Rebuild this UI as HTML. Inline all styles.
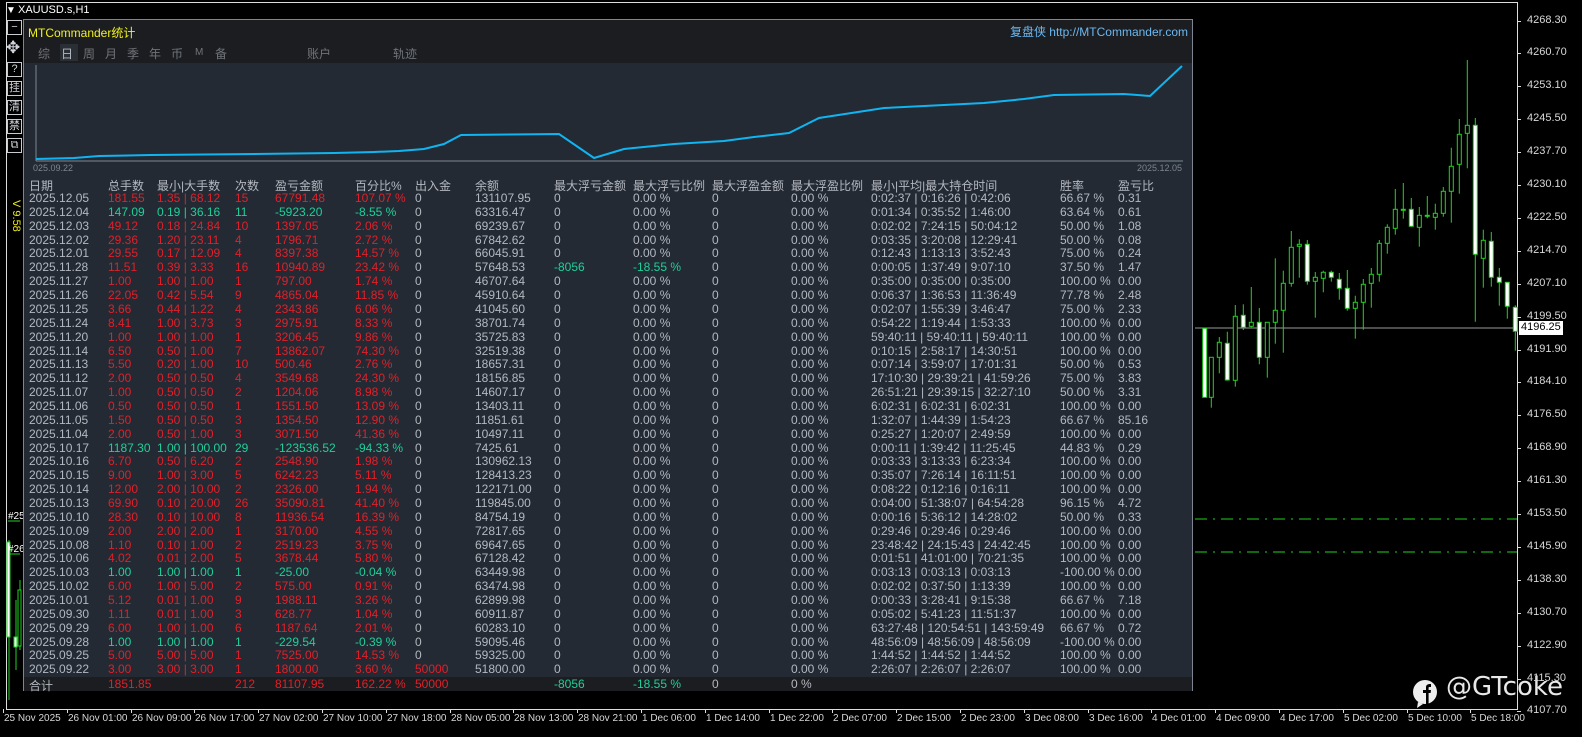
<!DOCTYPE html>
<html><head><meta charset="utf-8"><style>
*{margin:0;padding:0;box-sizing:border-box}
body{width:1582px;height:737px;background:#000;position:relative;overflow:hidden;font-family:"Liberation Sans","Noto Sans CJK SC",sans-serif;font-size:12px;color:#b4b8c0}
.a{position:absolute;white-space:nowrap}
#panel{position:absolute;left:23px;top:19px;width:1170px;height:672px;background:#232a33;border:1px solid #7d8590}
#hdr{position:absolute;left:0;top:0;width:100%;height:43px;background:#1b1d20}
.r{color:#e0202a}.g{color:#1fcf9a}.w{color:#b4b8c0}
.row{position:absolute;left:0;height:14px;width:100%}
.row span{position:absolute;top:0}
.tb{position:absolute;left:7px;width:15px;height:15px;border:1px solid #c8ccd2;color:#d0d4da;font-size:11px;text-align:center;line-height:13px}
.px{position:absolute;left:1527px;color:#d8d8d8;font-size:11px}
.tx{position:absolute;top:713px;color:#d8d8d8;font-size:10px}
</style></head><body>
<div class="a" style="left:6px;top:2px;width:1512px;height:1px;background:#ddd"></div>
<div class="a" style="left:6px;top:2px;width:1px;height:708px;background:#ddd"></div>
<div class="a" style="left:1517px;top:2px;width:1px;height:708px;background:#ddd"></div>
<div class="a" style="left:6px;top:709px;width:1512px;height:1px;background:#ddd"></div>
<div class="a" style="left:6px;top:5px;color:#fff;font-size:10px">▼</div>
<div class="a" style="left:18px;top:4px;color:#fff;font-size:11px">XAUUSD.s,H1</div>

<svg class="a" style="left:0;top:0" width="1582" height="737">
<line x1="1195" y1="328" x2="1517" y2="328" stroke="#9a9a9a"/>
<line x1="1195" y1="519" x2="1517" y2="519" stroke="#1fd21f" stroke-dasharray="12,6,2,6"/>
<line x1="1195" y1="552" x2="1517" y2="552" stroke="#1fd21f" stroke-dasharray="12,6,2,6"/>
<line x1="8" y1="521" x2="20" y2="521" stroke="#1fd21f"/>
<line x1="8" y1="554" x2="20" y2="554" stroke="#1fd21f"/>
<g stroke="#1fd21f" stroke-width="1">
<line x1="9" y1="540" x2="9" y2="700"/><rect x="7" y="542" width="3" height="95" fill="#fff"/>
<line x1="16" y1="600" x2="16" y2="670"/><rect x="14" y="637" width="3" height="10" fill="#fff"/>
<line x1="20" y1="580" x2="20" y2="650"/><rect x="18" y="590" width="3" height="56" fill="#000"/>
</g>
<g stroke="#1fd21f" stroke-width="1" id="c"></g>
<text x="8" y="519" fill="#fff" font-size="10" font-family="Liberation Sans">#25</text>
<text x="8" y="552" fill="#fff" font-size="10" font-family="Liberation Sans">#26</text>
</svg>

<div class="tb" style="top:20px">−</div>
<div class="a" style="left:6px;top:38px;color:#d0d4da;font-size:17px">✥</div>
<div class="tb" style="top:62px">?</div>
<div class="tb" style="top:81px">挂</div>
<div class="tb" style="top:100px">清</div>
<div class="tb" style="top:119px">禁</div>
<div class="tb" style="top:138px">⧉</div>
<div class="a" style="top:200px;color:#e8e820;font-size:11px;transform:rotate(90deg);transform-origin:left top;left:22px">V 9.58</div>

<div id="panel">
<div id="hdr">
<div class="a" style="left:4px;top:4px;color:#f0f020;font-size:12px">MTCommander统计</div>
<div class="a" style="right:4px;top:3px;color:#6cb8f0;font-size:12px">复盘侠 http://MTCommander.com</div>
<div class="a" style="left:14px;top:25px;color:#70747a">综</div>
<div class="a" style="left:36px;top:24px;width:18px;height:17px;background:#2a2f36"></div>
<div class="a" style="left:37px;top:25px;color:#b4b8c0">日</div>
<div class="a" style="left:59px;top:25px;color:#70747a">周</div>
<div class="a" style="left:81px;top:25px;color:#70747a">月</div>
<div class="a" style="left:103px;top:25px;color:#70747a">季</div>
<div class="a" style="left:125px;top:25px;color:#70747a">年</div>
<div class="a" style="left:147px;top:25px;color:#70747a">币</div>
<div class="a" style="left:171px;top:27px;color:#70747a;font-size:10px">M</div>
<div class="a" style="left:191px;top:25px;color:#70747a">备</div>
<div class="a" style="left:283px;top:25px;color:#70747a">账户</div>
<div class="a" style="left:369px;top:25px;color:#70747a">轨迹</div>
</div>
<svg class="a" style="left:0;top:43px" width="1170" height="130">
<line x1="12" y1="2" x2="12" y2="98" stroke="#7d8590"/>
<line x1="12" y1="98" x2="1159" y2="98" stroke="#7d8590"/>
<polyline fill="none" stroke="#10b4f0" stroke-width="2" points="12,96 50,95 75,93 127,92 230,91 310,90 350,89 375,88 400,86 420,81 437,72 535,71 570,95 600,86 650,81 700,78 730,74 765,70 795,55 860,45 960,40 1000,36 1030,32 1100,31 1126,33 1158,3"/>
<text x="9" y="108" fill="#7d8590" font-size="9" font-family="Liberation Sans">025.09.22</text>
<text x="1158" y="108" fill="#7d8590" font-size="9" font-family="Liberation Sans" text-anchor="end">2025.12.05</text>
</svg>
<div id="tbl"></div>
<div class="a" style="left:0;top:657px;width:1168px;height:14px;background:#1b1d20"></div>
<div class="row" style="top:657px">
<span style="left:5px" class="w">合计</span><span style="left:84px" class="r">1851.85</span><span style="left:211px" class="r">212</span><span style="left:251px" class="r">81107.95</span><span style="left:331px" class="r">162.22 %</span><span style="left:391px" class="r">50000</span><span style="left:530px" class="g">-8056</span><span style="left:609px" class="g">-18.55 %</span><span style="left:688px">0</span><span style="left:767px">0 %</span>
</div>
</div>

<div class="a" style="left:1519px;top:321px;width:44px;height:14px;background:#fff;color:#000;font-size:11px;padding-left:2px">4196.25</div>
<div class="a" style="left:1446px;top:672px;color:#e8e8e8;font-size:26px;font-family:'DejaVu Sans',sans-serif">@GTcoke</div>
<svg class="a" style="left:1412px;top:679px" width="26" height="30"><rect x="1" y="1" width="24" height="24" rx="12" fill="#eee"/><path d="M6 23 L5 29 L11 25 Z" fill="#eee"/><path d="M14 25 V14 H11 V11 H14 V8.5 C14 6 15.5 5 18 5 H19 V8 H17.5 C16.7 8 16.6 8.4 16.6 9 V11 H19 L18.6 14 H16.6 V25 Z" fill="#000"/></svg>
<div id="ax"></div>
<script>
var rows=[
["2025.12.05","181.55","1.35 | 68.12","15","67791.48","107.07 %","0","131107.95","0","0.00 %","0","0.00 %","0:02:37 | 0:16:26 | 0:42:06","66.67 %","0.31",0],
["2025.12.04","147.09","0.19 | 36.16","11","-5923.20","-8.55 %","0","63316.47","0","0.00 %","0","0.00 %","0:01:34 | 0:35:52 | 1:46:00","63.64 %","0.61",1],
["2025.12.03","49.12","0.18 | 24.84","10","1397.05","2.06 %","0","69239.67","0","0.00 %","0","0.00 %","0:02:02 | 7:24:15 | 50:04:12","50.00 %","1.08",0],
["2025.12.02","29.36","1.20 | 23.11","4","1796.71","2.72 %","0","67842.62","0","0.00 %","0","0.00 %","0:03:35 | 3:20:08 | 12:29:41","50.00 %","0.08",0],
["2025.12.01","29.55","0.17 | 12.09","4","8397.38","14.57 %","0","66045.91","0","0.00 %","0","0.00 %","0:12:43 | 1:13:13 | 3:52:43","75.00 %","0.24",0],
["2025.11.28","11.51","0.39 | 3.33","16","10940.89","23.42 %","0","57648.53","-8056","-18.55 %","0","0.00 %","0:00:05 | 1:37:49 | 9:07:10","37.50 %","1.47",0],
["2025.11.27","1.00","1.00 | 1.00","1","797.00","1.74 %","0","46707.64","0","0.00 %","0","0.00 %","0:35:00 | 0:35:00 | 0:35:00","100.00 %","0.00",0],
["2025.11.26","22.05","0.42 | 5.54","9","4865.04","11.85 %","0","45910.64","0","0.00 %","0","0.00 %","0:06:37 | 1:36:53 | 11:36:49","77.78 %","2.48",0],
["2025.11.25","3.66","0.44 | 1.22","4","2343.86","6.06 %","0","41045.60","0","0.00 %","0","0.00 %","0:02:07 | 1:55:39 | 3:46:47","75.00 %","2.33",0],
["2025.11.24","8.41","1.00 | 3.73","3","2975.91","8.33 %","0","38701.74","0","0.00 %","0","0.00 %","0:54:22 | 1:19:44 | 1:53:33","100.00 %","0.00",0],
["2025.11.20","1.00","1.00 | 1.00","1","3206.45","9.86 %","0","35725.83","0","0.00 %","0","0.00 %","59:40:11 | 59:40:11 | 59:40:11","100.00 %","0.00",0],
["2025.11.14","6.50","0.50 | 1.00","7","13862.07","74.30 %","0","32519.38","0","0.00 %","0","0.00 %","0:10:15 | 2:58:17 | 14:30:51","100.00 %","0.00",0],
["2025.11.13","5.50","0.20 | 1.00","10","500.46","2.76 %","0","18657.31","0","0.00 %","0","0.00 %","0:07:14 | 3:59:07 | 17:01:31","50.00 %","0.53",0],
["2025.11.12","2.00","0.50 | 0.50","4","3549.68","24.30 %","0","18156.85","0","0.00 %","0","0.00 %","17:10:30 | 29:39:21 | 41:59:26","75.00 %","3.83",0],
["2025.11.07","1.00","0.50 | 0.50","2","1204.06","8.98 %","0","14607.17","0","0.00 %","0","0.00 %","26:51:21 | 29:39:15 | 32:27:10","50.00 %","3.31",0],
["2025.11.06","0.50","0.50 | 0.50","1","1551.50","13.09 %","0","13403.11","0","0.00 %","0","0.00 %","6:02:31 | 6:02:31 | 6:02:31","100.00 %","0.00",0],
["2025.11.05","1.50","0.50 | 0.50","3","1354.50","12.90 %","0","11851.61","0","0.00 %","0","0.00 %","1:32:07 | 1:44:39 | 1:54:23","66.67 %","85.16",0],
["2025.11.04","2.00","0.50 | 1.00","3","3071.50","41.36 %","0","10497.11","0","0.00 %","0","0.00 %","0:25:27 | 1:20:07 | 2:49:59","100.00 %","0.00",0],
["2025.10.17","1187.30","1.00 | 100.00","29","-123536.52","-94.33 %","0","7425.61","0","0.00 %","0","0.00 %","0:00:11 | 1:39:42 | 11:25:45","44.83 %","0.29",1],
["2025.10.16","6.70","0.50 | 6.20","2","2548.90","1.98 %","0","130962.13","0","0.00 %","0","0.00 %","0:03:33 | 3:13:33 | 6:23:34","100.00 %","0.00",0],
["2025.10.15","9.00","1.00 | 3.00","5","6242.23","5.11 %","0","128413.23","0","0.00 %","0","0.00 %","0:35:07 | 7:26:14 | 16:11:51","100.00 %","0.00",0],
["2025.10.14","12.00","2.00 | 10.00","2","2326.00","1.94 %","0","122171.00","0","0.00 %","0","0.00 %","0:08:22 | 0:12:16 | 0:16:11","100.00 %","0.00",0],
["2025.10.13","69.90","0.10 | 20.00","26","35090.81","41.40 %","0","119845.00","0","0.00 %","0","0.00 %","0:04:00 | 51:38:07 | 64:54:28","96.15 %","4.72",0],
["2025.10.10","28.30","0.10 | 10.00","8","11936.54","16.39 %","0","84754.19","0","0.00 %","0","0.00 %","0:00:16 | 5:36:12 | 14:28:02","50.00 %","0.33",0],
["2025.10.09","2.00","2.00 | 2.00","1","3170.00","4.55 %","0","72817.65","0","0.00 %","0","0.00 %","0:29:46 | 0:29:46 | 0:29:46","100.00 %","0.00",0],
["2025.10.08","1.10","0.10 | 1.00","2","2519.23","3.75 %","0","69647.65","0","0.00 %","0","0.00 %","23:48:42 | 24:15:43 | 24:42:45","100.00 %","0.00",0],
["2025.10.06","4.02","0.01 | 2.00","5","3678.44","5.80 %","0","67128.42","0","0.00 %","0","0.00 %","0:01:51 | 41:01:00 | 70:21:35","100.00 %","0.00",0],
["2025.10.03","1.00","1.00 | 1.00","1","-25.00","-0.04 %","0","63449.98","0","0.00 %","0","0.00 %","0:03:13 | 0:03:13 | 0:03:13","-100.00 %","0.00",1],
["2025.10.02","6.00","1.00 | 5.00","2","575.00","0.91 %","0","63474.98","0","0.00 %","0","0.00 %","0:02:02 | 0:37:50 | 1:13:39","100.00 %","0.00",0],
["2025.10.01","5.12","0.01 | 1.00","9","1988.11","3.26 %","0","62899.98","0","0.00 %","0","0.00 %","0:00:33 | 3:28:41 | 9:15:38","66.67 %","7.18",0],
["2025.09.30","1.11","0.01 | 1.00","3","628.77","1.04 %","0","60911.87","0","0.00 %","0","0.00 %","0:05:02 | 5:41:23 | 11:51:37","100.00 %","0.00",0],
["2025.09.29","6.00","1.00 | 1.00","6","1187.64","2.01 %","0","60283.10","0","0.00 %","0","0.00 %","63:27:48 | 120:54:51 | 143:59:49","66.67 %","0.72",0],
["2025.09.28","1.00","1.00 | 1.00","1","-229.54","-0.39 %","0","59095.46","0","0.00 %","0","0.00 %","48:56:09 | 48:56:09 | 48:56:09","-100.00 %","0.00",1],
["2025.09.25","5.00","5.00 | 5.00","1","7525.00","14.53 %","0","59325.00","0","0.00 %","0","0.00 %","1:44:52 | 1:44:52 | 1:44:52","100.00 %","0.00",0],
["2025.09.22","3.00","3.00 | 3.00","1","1800.00","3.60 %","50000","51800.00","0","0.00 %","0","0.00 %","2:26:07 | 2:26:07 | 2:26:07","100.00 %","0.00",0]];
var xs=[5,84,133,211,251,331,391,451,530,609,688,767,847,1036,1094];
var hd=["日期","总手数","最小|大手数","次数","盈亏金额","百分比%","出入金","余额","最大浮亏金额","最大浮亏比例","最大浮盈金额","最大浮盈比例","最小|平均|最大持仓时间","胜率","盈亏比"];
var h='<div class="row" style="top:157px">';
hd.forEach(function(t,i){h+='<span style="left:'+xs[i]+'px">'+t+'</span>'});h+='</div>';
rows.forEach(function(r,k){
 var c=r[15]?'g':'r';
 h+='<div class="row" style="top:'+(171+k*13.86).toFixed(1)+'px">';
 for(var i=0;i<15;i++){var cl='w';
  if(i>=1&&i<=5)cl=c;
  if(i==6&&r[6]!="0")cl='r';
  if((i==8||i==9)&&r[8]!="0")cl='g';
  h+='<span class="'+cl+'" style="left:'+xs[i]+'px">'+r[i]+'</span>';}
 h+='</div>';});
document.getElementById('tbl').innerHTML=h;
var c=[[44,865,1072,865,1072,1],[64,952,1072,952,1103,0],[88,907,952,891,1000,0],[112,910,1020,875,1022,1],[136,829,1021,795,1040,0],[160,826,862,793,870,1],[184,847,859,741,862,0],[208,847,952,804,973,1],[232,847,952,847,1013,0],[256,811,847,655,911,0],[280,730,811,692,938,0],[304,622,730,573,740,0],[328,613,619,598,713,0],[352,613,724,600,734,1],[376,712,724,696,833,0],[400,697,715,692,757,0],[424,697,712,692,725,1],[448,718,745,699,779,1],[472,745,805,690,812,1],[496,787,805,767,896,0],[520,733,787,717,869,0],[544,703,730,684,803,0],[568,610,703,600,725,0],[592,562,610,553,641,0],[616,508,565,447,584,0],[640,508,511,429,536,0],[664,508,559,474,560,1],[688,526,562,501,620,0],[712,526,528,468,535,0],[736,520,532,491,569,0],[760,454,520,441,530,0],[784,379,454,323,548,0],[808,283,373,237,461,0],[832,256,280,60,385,0],[856,256,643,234,845,1],[880,601,655,569,743,0],[904,604,712,576,740,1],[928,712,727,684,797,1],[952,727,799,727,836,1],[976,802,874,796,932,1]];
var s='';c.forEach(function(d){var x=1190+d[0]/3;s+='<line x1="'+x.toFixed(1)+'" y1="'+(40+d[3]/3).toFixed(1)+'" x2="'+x.toFixed(1)+'" y2="'+(40+d[4]/3).toFixed(1)+'"/><rect x="'+(x-2).toFixed(1)+'" y="'+(40+d[1]/3).toFixed(1)+'" width="4" height="'+Math.max(1,(d[2]-d[1])/3).toFixed(1)+'" fill="'+(d[5]?'#fff':'#000')+'"/>';});
document.getElementById('c').innerHTML=s;
var p=["4268.30","4260.70","4253.10","4245.50","4237.70","4230.10","4222.50","4214.70","4207.10","4199.50","4191.90","4184.10","4176.50","4168.90","4161.30","4153.50","4145.90","4138.30","4130.70","4122.90","4115.30","4107.70"];
var a='';p.forEach(function(t,i){var y=20.5+i*32.9;a+='<div class="px" style="top:'+(y-7).toFixed(0)+'px">'+t+'</div><div class="a" style="left:1517px;top:'+y.toFixed(0)+'px;width:4px;height:1px;background:#ddd"></div>';});
var t=["25 Nov 2025","26 Nov 01:00","26 Nov 09:00","26 Nov 17:00","27 Nov 02:00","27 Nov 10:00","27 Nov 18:00","28 Nov 05:00","28 Nov 13:00","28 Nov 21:00","1 Dec 06:00","1 Dec 14:00","1 Dec 22:00","2 Dec 07:00","2 Dec 15:00","2 Dec 23:00","3 Dec 08:00","3 Dec 16:00","4 Dec 01:00","4 Dec 09:00","4 Dec 17:00","5 Dec 02:00","5 Dec 10:00","5 Dec 18:00"];
t.forEach(function(s,i){var x=i==0?3:3+64*i-0.2*i;a+='<div class="tx" style="left:'+(x+1).toFixed(0)+'px">'+s+'</div><div class="a" style="left:'+x.toFixed(0)+'px;top:709px;width:1px;height:4px;background:#ddd"></div>';});
document.getElementById('ax').innerHTML=a;
</script>
</body></html>
